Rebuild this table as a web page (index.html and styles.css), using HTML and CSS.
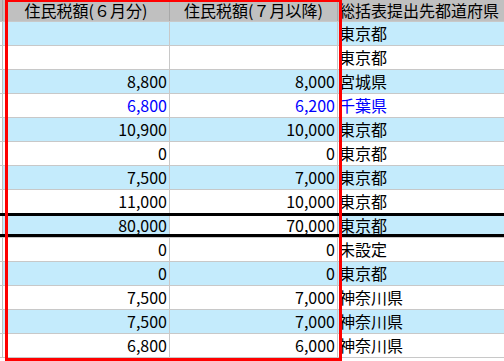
FILE: index.html
```html
<!DOCTYPE html>
<html lang="ja">
<head>
<meta charset="utf-8">
<link rel="stylesheet" href="styles.css">
</head>
<body>
<div class="grid">
  <div class="row head">
    <div class="c0"></div>
    <div class="c1">住民税額(６月分)</div>
    <div class="c2">住民税額(７月以降)</div>
    <div class="c3">総括表提出先都道府県</div>
  </div>
  <div class="row alt"><div class="c0"></div><div class="c1"></div><div class="c2"></div><div class="c3">東京都</div></div>
  <div class="row"><div class="c0"></div><div class="c1"></div><div class="c2"></div><div class="c3">東京都</div></div>
  <div class="row alt"><div class="c0"></div><div class="c1">8,800</div><div class="c2">8,000</div><div class="c3">宮城県</div></div>
  <div class="row blue"><div class="c0"></div><div class="c1">6,800</div><div class="c2">6,200</div><div class="c3">千葉県</div></div>
  <div class="row alt"><div class="c0"></div><div class="c1">10,900</div><div class="c2">10,000</div><div class="c3">東京都</div></div>
  <div class="row"><div class="c0"></div><div class="c1">0</div><div class="c2">0</div><div class="c3">東京都</div></div>
  <div class="row alt"><div class="c0"></div><div class="c1">7,500</div><div class="c2">7,000</div><div class="c3">東京都</div></div>
  <div class="row"><div class="c0"></div><div class="c1">11,000</div><div class="c2">10,000</div><div class="c3">東京都</div></div>
  <div class="row alt sel"><div class="c0"></div><div class="c1">80,000</div><div class="c2 cur">70,000</div><div class="c3">東京都</div></div>
  <div class="row"><div class="c0"></div><div class="c1">0</div><div class="c2">0</div><div class="c3">未設定</div></div>
  <div class="row alt"><div class="c0"></div><div class="c1">0</div><div class="c2">0</div><div class="c3">東京都</div></div>
  <div class="row"><div class="c0"></div><div class="c1">7,500</div><div class="c2">7,000</div><div class="c3">神奈川県</div></div>
  <div class="row alt"><div class="c0"></div><div class="c1">7,500</div><div class="c2">7,000</div><div class="c3">神奈川県</div></div>
  <div class="row"><div class="c0"></div><div class="c1">6,800</div><div class="c2">6,000</div><div class="c3">神奈川県</div></div>
</div>
<div class="mark"></div>
</body>
</html>
```
FILE: styles.css
```css
html, body {
  margin: 0;
  padding: 0;
  background: #ffffff;
  width: 504px;
  height: 361px;
  overflow: hidden;
  position: relative;
  font-family: "Noto Sans CJK JP", "DejaVu Sans", sans-serif;
  font-size: 16px;
  color: #000;
}
.grid {
  display: flex;
  flex-direction: column;
}
.row {
  display: flex;
  height: 23px;
  border-bottom: 1px solid #c8c8c8;
  line-height: 23px;
  white-space: nowrap;
  position: relative;
}
.row > div {
  overflow: hidden;
  flex: none;
}
.c0 {
  width: 2px;
  border-right: 1px solid #c0c0c0;
}
.c1 {
  width: 164px;
  padding-right: 2px;
  text-align: right;
  border-right: 1px solid #c8c8c8;
}
.c2 {
  width: 165px;
  padding-right: 2px;
  text-align: right;
  border-right: 1px solid #c8c8c8;
}
.row > .c3 {
  flex: 1;
  padding-left: 1px;
}
.head {
  height: 21px;
  line-height: 20px;
  background: #c0c0c0;
}
.head > div {
  overflow: visible;
}
.head .c1, .head .c2 {
  text-align: center;
  padding-right: 0;
  width: 166px;
}
.head .c2 { width: 167px; }
.head .c0, .head .c1, .head .c2 { border-right-color: #a8a8a8; }
.alt .c1, .alt .c2, .alt .c3 {
  background: #c4ebfc;
}
.alt .c2.cur { background: #ffffff; }
.blue { color: #0000ff; }
.sel::after {
  content: "";
  position: absolute;
  left: 0;
  right: 0;
  top: -1px;
  height: 18px;
  border-top: 3px solid #000;
  border-bottom: 3px solid #000;
}
.mark {
  position: absolute;
  left: 5px;
  top: -1px;
  width: 337px;
  height: 362px;
  box-sizing: border-box;
  border: 3px solid #ff0000;
}
```
